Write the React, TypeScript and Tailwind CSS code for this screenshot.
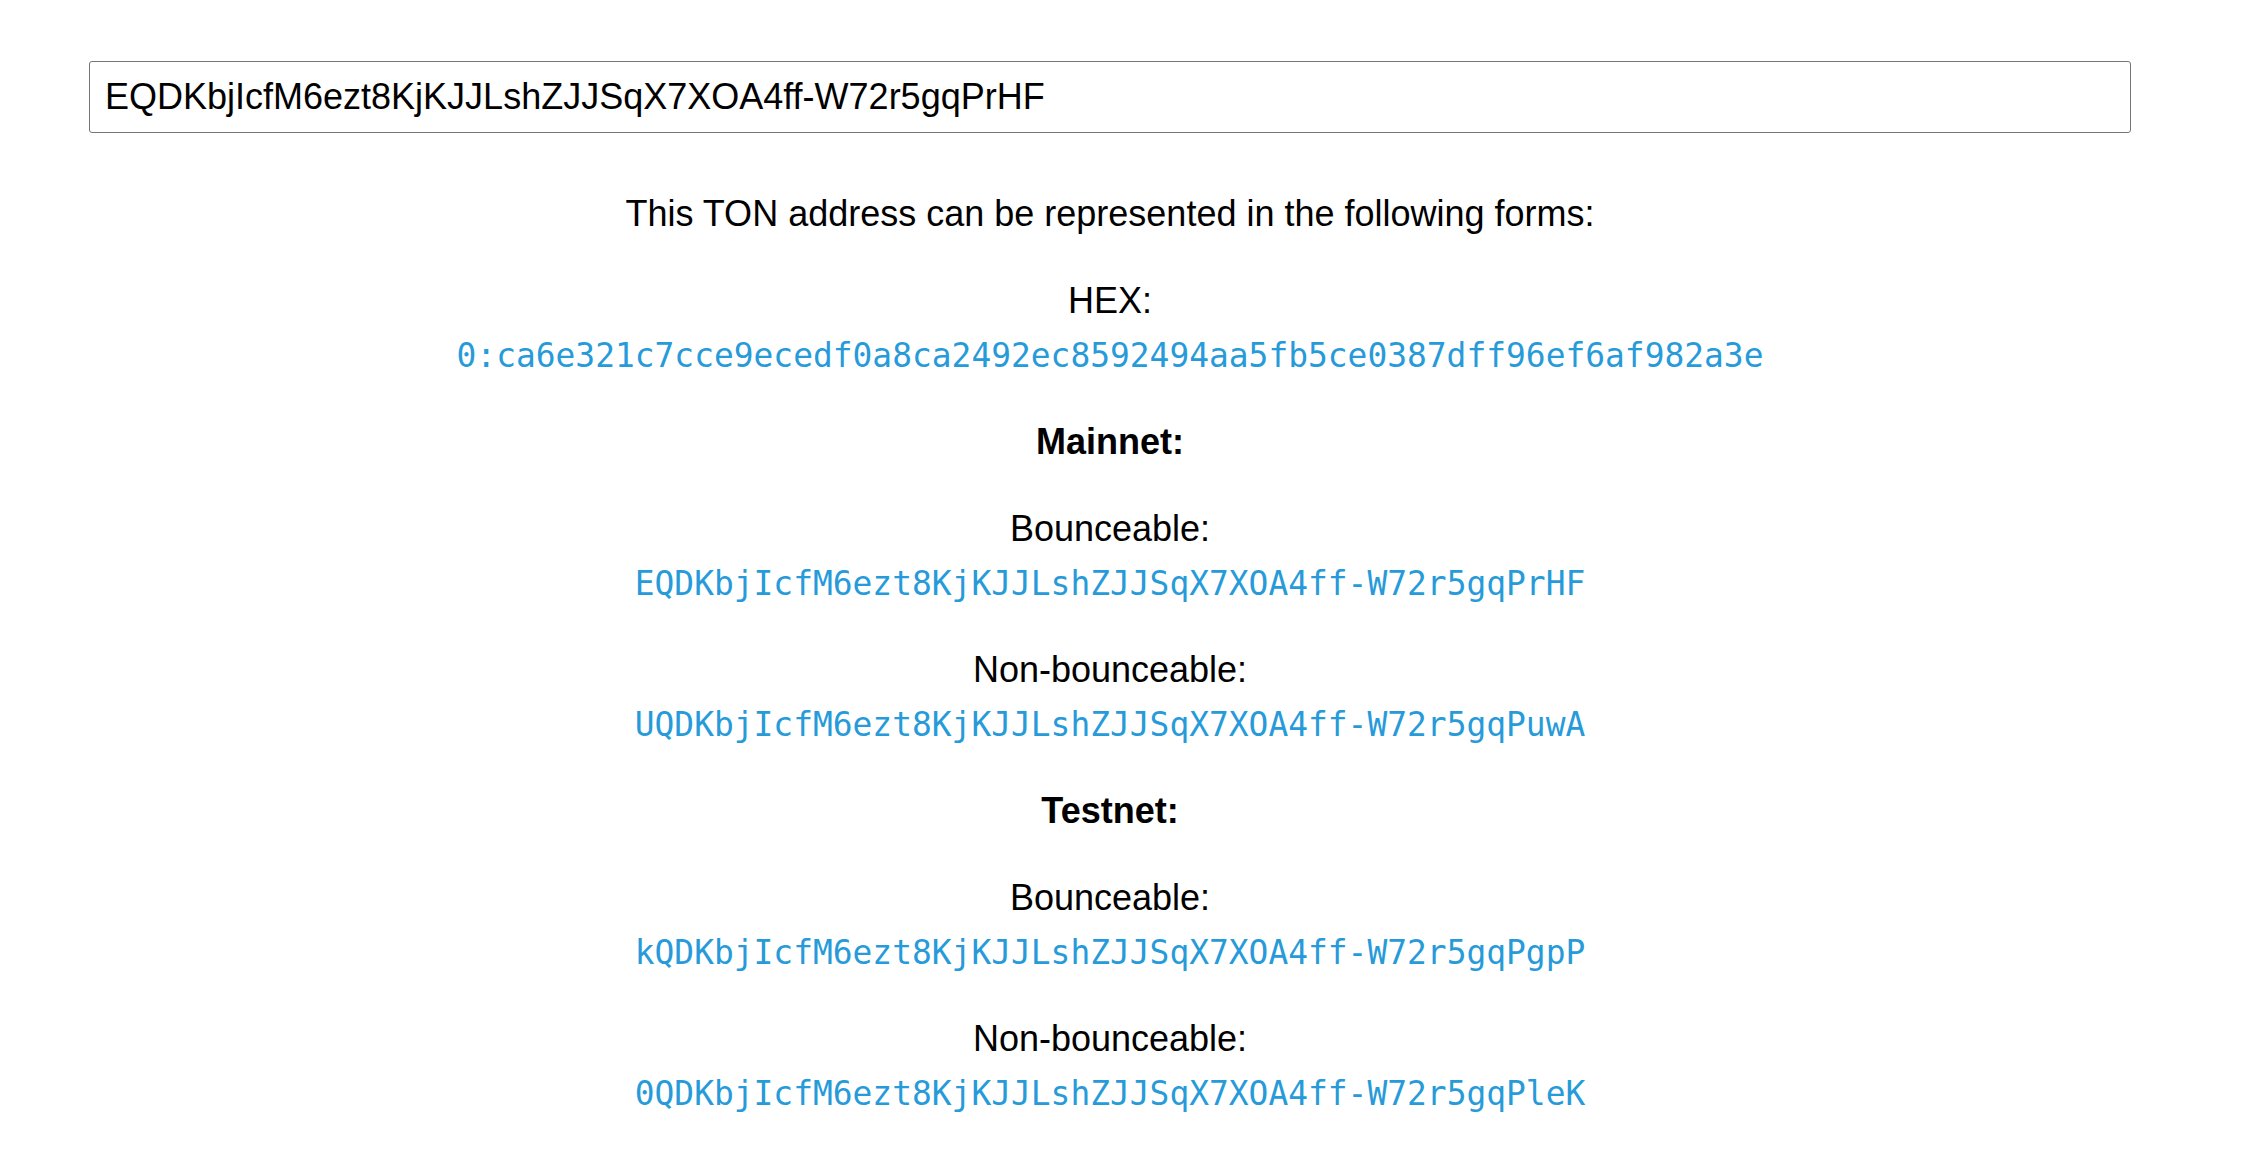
import React from 'react';

const sans = { fontFamily: '"Liberation Sans", Arial, sans-serif' };

const Label = ({ children }: { children: React.ReactNode }) => (
  <div className="pt-[2px] text-[36px] leading-[52px] text-black">{children}</div>
);

const Value = ({ children }: { children: React.ReactNode }) => (
  <div className="pt-[3px] font-['DejaVu_Sans_Mono',monospace] text-[32.9px] leading-[51px] text-[#279bd9]">{children}</div>
);

const Heading = ({ children }: { children: React.ReactNode }) => (
  <div className="mt-[33px] pt-[2px] text-[36px] font-bold leading-[52px] text-black">{children}</div>
);

const Pair = ({ label, value }: { label: string; value: string }) => (
  <div className="mt-[33px]">
    <Label>{label}</Label>
    <Value>{value}</Value>
  </div>
);

const App = () => {
  const address = 'EQDKbjIcfM6ezt8KjKJJLshZJJSqX7XOA4ff-W72r5gqPrHF';

  return (
    <div className="min-h-screen bg-white font-['Liberation_Sans',Arial,sans-serif]" style={sans}>
      <div className="ml-[89px] w-[2042px] pt-[61px]">
        <input
          readOnly
          value={address}
          className="h-[72px] w-full rounded-[3px] border border-[#767676] px-[15px] text-[36px] text-black outline-none"
        />
        <div className="mt-[53px] text-center">
          <Label>This TON address can be represented in the following forms:</Label>
          <Pair label="HEX:" value="0:ca6e321c7cce9ecedf0a8ca2492ec8592494aa5fb5ce0387dff96ef6af982a3e" />
          <Heading>Mainnet:</Heading>
          <Pair label="Bounceable:" value="EQDKbjIcfM6ezt8KjKJJLshZJJSqX7XOA4ff-W72r5gqPrHF" />
          <Pair label="Non-bounceable:" value="UQDKbjIcfM6ezt8KjKJJLshZJJSqX7XOA4ff-W72r5gqPuwA" />
          <Heading>Testnet:</Heading>
          <Pair label="Bounceable:" value="kQDKbjIcfM6ezt8KjKJJLshZJJSqX7XOA4ff-W72r5gqPgpP" />
          <Pair label="Non-bounceable:" value="0QDKbjIcfM6ezt8KjKJJLshZJJSqX7XOA4ff-W72r5gqPleK" />
        </div>
      </div>
    </div>
  );
};

export default App;
